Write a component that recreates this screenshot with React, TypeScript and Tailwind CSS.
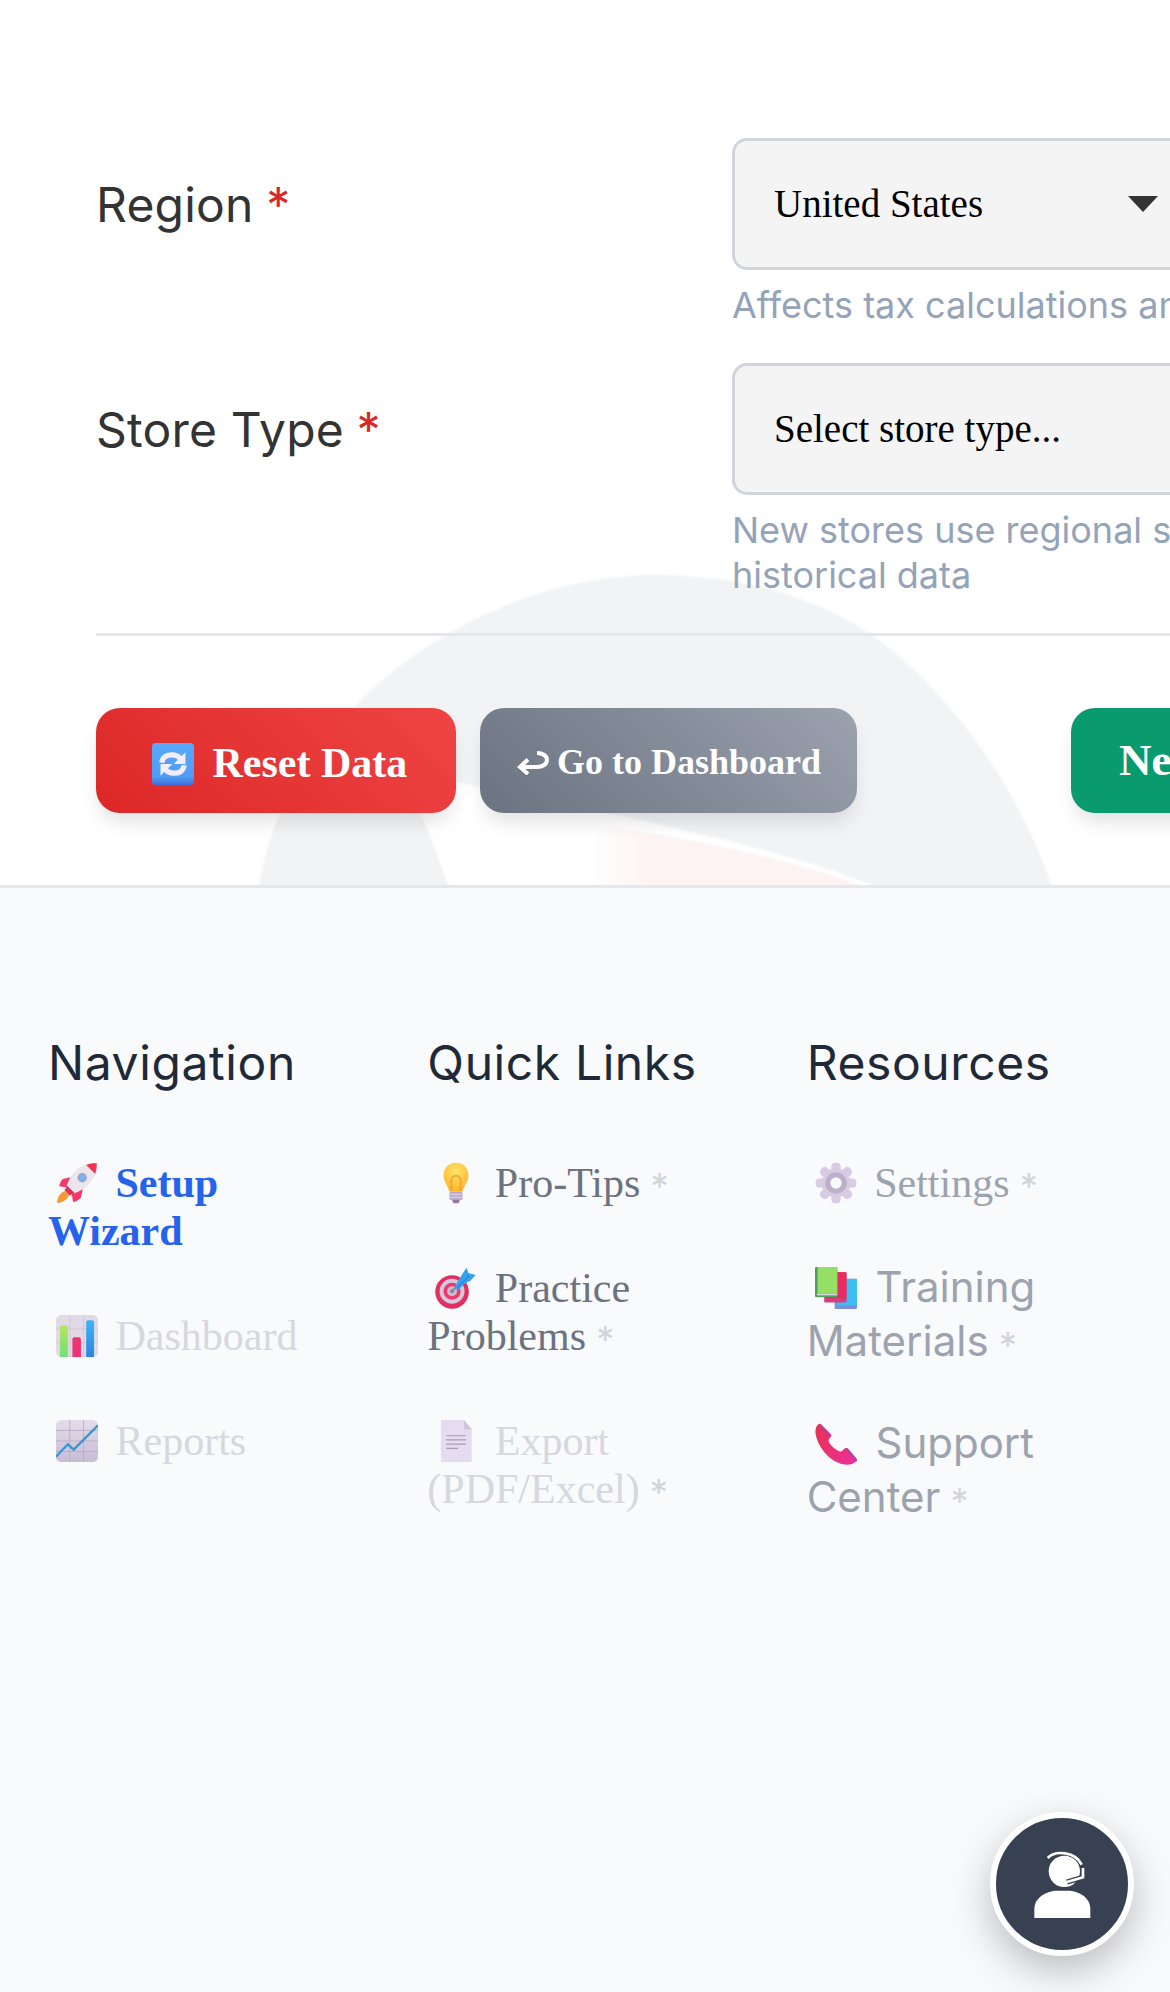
import type { ReactNode } from "react";

const emojiBox = "inline-block w-[42px] h-[42px] ml-[8px] mr-[7px] align-[-7px]";

function Rocket() {
  return (
    <svg viewBox="0 0 32 32" className={emojiBox}>
      <path d="M7 22C3 23 1 27 .8 31.2 5 31 9 28.5 10 25z" fill="#f59a32" />
      <path d="M12 11.5 5 13Q3 15 2.4 18.5L8.500 19.500z" fill="#f4386a" />
      <path d="M20.500 20 19 27Q16.500 30 13 30.500L12 24z" fill="#f4386a" />
      <path d="M31 1C24.500.5 18 3 13.500 8 11 11 9 15 8 18.500l5.500 5.500c3.500-1 7-3 10-5.500 5-4.500 8-11 7.500-17.500z" fill="#ebe5ee" />
      <path d="M31 1C28.500.8 25.500 1.100 23 2.200L29.800 9c1-2.500 1.400-5.500 1.200-8z" fill="#f0354d" />
      <path d="M8.500 18 6.500 21.500 10.500 25.500 14 23.500z" fill="#e0305f" />
      <circle cx="20" cy="12" r="3.600" fill="#a9a0b5" />
      <circle cx="20" cy="12" r="2.500" fill="#6db7f7" />
    </svg>
  );
}

function Bars() {
  return (
    <svg viewBox="0 0 32 32" className={emojiBox}>
      <defs>
        <linearGradient id="barGreen" x1="0" y1="0" x2="0" y2="1">
          <stop offset="0" stopColor="#b5e55a" />
          <stop offset="1" stopColor="#6fe07a" />
        </linearGradient>
        <linearGradient id="barBlue" x1="0" y1="0" x2="0" y2="1">
          <stop offset="0" stopColor="#3fb4f5" />
          <stop offset="1" stopColor="#2a86dc" />
        </linearGradient>
      </defs>
      <rect width="32" height="32" rx="4" fill="#e1dae6" />
      <path d="M0 10.500h32M0 21h32M10.500 0v32M21 0v32" stroke="#cdc4d4" strokeWidth=".6" />
      <path d="M3 9.500Q3 8 4.500 8h3Q9 8 9 9.500V32H3z" fill="url(#barGreen)" />
      <path d="M12.500 18.500q0-1.500 1.500-1.500h3.500q1.500 0 1.500 1.500V32h-6.500z" fill="#ee3474" />
      <path d="M23 5.500Q23 4 24.500 4h3Q29 4 29 5.500V32h-6z" fill="url(#barBlue)" />
    </svg>
  );
}

function LineChart() {
  return (
    <svg viewBox="0 0 32 32" className={emojiBox}>
      <defs>
        <linearGradient id="lineBg" x1="0" y1="0" x2="0" y2="1">
          <stop offset="0" stopColor="#e3dde8" />
          <stop offset="1" stopColor="#c9bcd6" />
        </linearGradient>
      </defs>
      <rect width="32" height="32" rx="4" fill="url(#lineBg)" />
      <path d="M0 8h32M0 16h32M0 24h32M10.500 0v32M21 0v32" stroke="#b9adc4" strokeWidth=".7" />
      <path d="M0 28 9 18.500 13.500 22.500 32 4" fill="none" stroke="#3a97d6" strokeWidth="1.800" />
    </svg>
  );
}

function Bulb() {
  return (
    <svg viewBox="0 0 32 32" className={emojiBox}>
      <defs>
        <radialGradient id="bulbFill" cx=".5" cy=".3" r=".7">
          <stop offset="0" stopColor="#ffe36a" />
          <stop offset="1" stopColor="#ffb52a" />
        </radialGradient>
      </defs>
      <path d="M16 .5C10 .5 6.500 5 6.500 10c0 5 3.500 8 4.500 12.500h10c1-4.500 4.500-7.500 4.500-12.500C25.500 5 22 .5 16 .5z" fill="url(#bulbFill)" />
      <path d="M12.500 22V14a3.500 3.500 0 1 1 7 0v8" fill="none" stroke="#f59f30" strokeWidth="1.200" />
      <rect x="11" y="22.500" width="10" height="6.500" rx="1.500" fill="#b7a7c4" />
      <path d="M11.500 24.500h9M11.500 26.800h9" stroke="#e6deec" strokeWidth=".8" />
      <path d="M13 29h6l-1 2.500h-4z" fill="#8f7ea0" />
    </svg>
  );
}

function Target() {
  return (
    <svg viewBox="0 0 32 32" className={emojiBox}>
      <circle cx="13" cy="19" r="12.800" fill="#e0305f" />
      <circle cx="13" cy="18.500" r="9.500" fill="#d3c8dc" />
      <circle cx="13" cy="18.500" r="6.500" fill="#f0386a" />
      <circle cx="13" cy="18.500" r="3.800" fill="#c9bdd2" />
      <circle cx="13" cy="18.500" r="1.500" fill="#8f8498" />
      <path d="M13 18.500 20 11.500" stroke="#8f8498" strokeWidth="1.500" />
      <path d="M15 15 19.500 7.500 24 .5 25.500 4.500 31 6 27 10.500 22 13 17.500 18z" fill="#35a4ec" />
      <path d="M17 16 26 6.500" stroke="#1f7fd0" strokeWidth=".8" />
    </svg>
  );
}

function Doc() {
  return (
    <svg viewBox="0 0 32 32" className={emojiBox}>
      <path d="M4.500 0H22l6 7v25H4.500z" fill="#e5dcf0" />
      <path d="M22 0l6 7h-6z" fill="#cfc4dc" />
      <path d="M8.500 12h15M8.500 15.200h15M8.500 18.400h15M8.500 21.600h9" stroke="#a79fb0" strokeWidth=".9" />
    </svg>
  );
}

function Gear() {
  return (
    <svg viewBox="0 0 32 32" className={emojiBox}>
      <g fill="#d8cce4">
        <rect x="12.500" y=".5" width="7" height="8" rx="3" />
        <rect x="12.500" y="23.500" width="7" height="8" rx="3" />
        <rect x="12.500" y=".5" width="7" height="8" rx="3" transform="rotate(45 16 16)" />
        <rect x="12.500" y="23.500" width="7" height="8" rx="3" transform="rotate(45 16 16)" />
        <rect x="12.500" y=".5" width="7" height="8" rx="3" transform="rotate(90 16 16)" />
        <rect x="12.500" y="23.500" width="7" height="8" rx="3" transform="rotate(90 16 16)" />
        <rect x="12.500" y=".5" width="7" height="8" rx="3" transform="rotate(135 16 16)" />
        <rect x="12.500" y="23.500" width="7" height="8" rx="3" transform="rotate(135 16 16)" />
        <circle cx="16" cy="16" r="11" />
      </g>
      <circle cx="16" cy="16" r="8.200" fill="#bdb0c9" />
      <circle cx="16" cy="16" r="4.300" fill="#f9fafb" />
    </svg>
  );
}

function Books() {
  return (
    <svg viewBox="0 0 32 32" className={emojiBox}>
      <rect x="15" y="9" width="17" height="23" rx="1" fill="#7d8fe0" />
      <rect x="16.500" y="9" width="15.500" height="20" fill="#3cc0f2" />
      <rect x="7" y="4" width="17" height="23" rx="1" fill="#d33f80" />
      <rect x="8.500" y="4" width="15.500" height="20" fill="#e62d62" />
      <rect x="0" y="0" width="17" height="23" rx="1" fill="#4fa05a" />
      <rect x="2" y="0" width="15" height="20" fill="#96df66" />
      <rect x="1.500" y="20.200" width="15.500" height="1.400" fill="#dcd6e6" />
    </svg>
  );
}

function Phone() {
  return (
    <svg viewBox="0 0 32 32" className={emojiBox}>
      <defs>
        <linearGradient id="phoneFill" x1="0" y1="0" x2="1" y2="1">
          <stop offset="0" stopColor="#e8304f" />
          <stop offset="1" stopColor="#ee2f9c" />
        </linearGradient>
      </defs>
      <path d="M4.500 1 12 8.500Q13 9.800 11.500 11L10.500 12.500Q10 14 11.500 16 14.500 20 18.500 21.500 20 22 21 21L22.500 19.500Q24 18.500 25 19.500L31.500 27Q32.500 28.500 31 29.500 28 32 24.500 31.800 14 31 7 22 1 14.500.3 7 .3 3 2.500 1 3.500.3 4.500 1z" fill="url(#phoneFill)" />
      <path d="M4.500 1 12 8.500Q13 9.800 11.800 10.800L3 2Q3.800.6 4.500 1zM25 19.500 31.500 27Q32.500 28.500 31 29.500L23 19.700Q24 18.700 25 19.500z" fill="#b0459e" />
    </svg>
  );
}

function Refresh() {
  return (
    <svg viewBox="0 0 32 32" className="inline-block w-[42px] h-[42px] ml-[8px] mr-[8px] align-[-8px]">
      <defs>
        <linearGradient id="refreshFill" x1="0" y1="0" x2="0" y2="1">
          <stop offset="0" stopColor="#5aa9fb" />
          <stop offset=".8" stopColor="#4f9cf5" />
          <stop offset="1" stopColor="#3f6fdc" />
        </linearGradient>
      </defs>
      <rect width="32" height="32" rx="3" fill="url(#refreshFill)" />
      <path d="M7.500 15C8 10.500 11.500 9 15 9c3 0 5.500 1 7 3.500M24.500 17C24 21.500 20.500 23 17 23c-3 0-5.500-1-7-3.500" fill="none" stroke="#f3ecfa" strokeWidth="4" />
      <path d="M25.500 7v9H16.500zM6.500 25v-9H15.500z" fill="#f3ecfa" />
    </svg>
  );
}

type LinkItem = {
  icon: ReactNode;
  label: string;
  color: string;
  gap: string;
  sans?: boolean;
  active?: boolean;
  required?: boolean;
};

const columns: { title: string; items: LinkItem[] }[] = [
  {
    title: "Navigation",
    items: [
      { icon: <Rocket />, label: "Setup Wizard", color: "text-[#2563eb]", gap: "", active: true },
      { icon: <Bars />, label: "Dashboard", color: "text-[#d6d8de]", gap: "mt-[57px]" },
      { icon: <LineChart />, label: "Reports", color: "text-[#d6d8de]", gap: "mt-[57px]" },
    ],
  },
  {
    title: "Quick Links",
    items: [
      { icon: <Bulb />, label: "Pro-Tips", color: "text-[#6b7280]", gap: "", required: true },
      { icon: <Target />, label: "Practice Problems", color: "text-[#6b7280]", gap: "mt-[57px]", required: true },
      { icon: <Doc />, label: "Export (PDF/Excel)", color: "text-[#d6d8de]", gap: "mt-[57px]", required: true },
    ],
  },
  {
    title: "Resources",
    items: [
      { icon: <Gear />, label: "Settings", color: "text-[#9ca3af]", gap: "", required: true },
      { icon: <Books />, label: "Training Materials", color: "text-[#9ca3af]", gap: "mt-[53px]", sans: true, required: true },
      { icon: <Phone />, label: "Support Center", color: "text-[#9ca3af]", gap: "mt-[48px]", sans: true, required: true },
    ],
  },
];

function FormRow({ label, value, hint, arrow }: { label: string; value: string; hint: ReactNode; arrow?: boolean }) {
  return (
    <div className="flex mb-[35px]">
      <div className="w-[636px] shrink-0 pt-[31px] text-[48px] leading-[72px] tracking-[0.2px] text-[#333333]">
        {label} <span className="-ml-[1px] text-[#dc2626]">*</span>
      </div>
      <div className="w-[700px] shrink-0">
        <div className="h-[132px] flex items-center justify-between rounded-[15px] border-[3px] border-[#d1d5db] bg-[#f4f4f4] pl-[39px] pr-[271px] font-['Liberation_Serif',serif] text-[39px] text-black">
          <span>{value}</span>
          {arrow && (
            <svg viewBox="0 0 30 16" className="w-[30px] h-[16px]">
              <path d="M0 0h30L15 16z" fill="#333333" />
            </svg>
          )}
        </div>
        <p className="mt-[13px] text-[36px] leading-[45px] text-[#94a3b8] whitespace-nowrap">{hint}</p>
      </div>
    </div>
  );
}

function App() {
  return (
    <div className="relative w-[1170px] h-[1992px] overflow-hidden bg-[#f9fafc] font-['Inter',sans-serif]">
      <section className="relative h-[888px] overflow-hidden bg-white border-b-[3px] border-[#e5e7eb] pt-[138px] pl-[96px]">
        <svg viewBox="0 0 1170 888" className="absolute left-0 top-0 w-[1170px] h-[888px] blur-[1px]">
          <defs>
            <linearGradient id="swoosh" gradientUnits="userSpaceOnUse" x1="590" y1="0" x2="650" y2="0">
              <stop offset="0" stopColor="#ffffff" />
              <stop offset="1" stopColor="#fdf3f3" />
            </linearGradient>
          </defs>
          <path d="M258 895C268 820 300 760 357 703 410 650 520 576 653 575 760 575 840 605 900 657 960 710 1020 790 1055 895z" fill="#f2f3f5" />
          <path d="M395 770C420 800 435 850 452 895H895C800 850 600 810 395 770z" fill="#ffffff" />
          <path d="M590 824C700 840 800 860 885 895H590z" fill="url(#swoosh)" />
        </svg>
        <div className="relative w-[1400px]">
          <FormRow label="Region" value="United States" hint="Affects tax calculations and reports" arrow />
          <FormRow
            label="Store Type"
            value="Select store type..."
            hint={
              <>
                New stores use regional sales averages instead of
                <br />
                historical data
              </>
            }
          />
          <div className="h-[3px] bg-[#e5e7eb]" />
          <div className="mt-[72px] flex items-stretch font-['Liberation_Serif',serif] font-bold text-white whitespace-nowrap">
            <button className="h-[105px] w-[360px] shrink-0 rounded-[24px] bg-linear-45 from-[#dc2626] to-[#ef4444] pl-[48px] pt-[5px] text-left text-[42px] shadow-[0_12px_20px_-4px_rgba(0,0,0,0.12)]">
              <Refresh /> Reset Data
            </button>
            <button className="ml-[24px] h-[105px] w-[377px] shrink-0 rounded-[24px] bg-linear-45 from-[#6b7280] to-[#9ca3af] pl-[37px] pt-[2px] text-left text-[36px] shadow-[0_12px_20px_-4px_rgba(0,0,0,0.12)]">
              <svg viewBox="0 0 32 24" className="inline-block w-[32px] h-[24px] mr-[8px] align-[-1px]">
                <path d="M3 16H20C26 16 30 13 30 9 30 5 26 2 20 2M11 8.500 3 16 11 23" fill="none" stroke="#ffffff" strokeWidth="4" />
              </svg>
              Go to Dashboard
            </button>
            <button className="ml-[214px] h-[105px] w-[300px] shrink-0 rounded-[24px] bg-[#099b6d] pl-[48px] text-left text-[45px] shadow-[0_12px_20px_-4px_rgba(0,0,0,0.12)]">
              Next Step
            </button>
          </div>
        </div>
      </section>

      <footer className="grid w-[1072px] ml-[48px] grid-cols-3 gap-x-[66px] pt-[139px]">
        {columns.map((col) => (
          <div key={col.title}>
            <h3 className="mb-[60px] text-[48px] leading-[72px] tracking-[0.6px] text-[#1f2937]">{col.title}</h3>
            <ul>
              {col.items.map((item) => (
                <li
                  key={item.label}
                  className={`${item.gap} ${item.color} ${item.active ? "font-bold" : ""} ${
                    item.sans ? "text-[42px] leading-[54px]" : "font-['Liberation_Serif',serif] text-[42px] leading-[48px]"
                  }`}
                >
                  {item.icon} {item.label}
                  {item.required && <span className="font-['Inter',sans-serif] text-[36px] leading-none font-normal text-[#d1d5db] align-[-2px]"> *</span>}
                </li>
              ))}
            </ul>
          </div>
        ))}
      </footer>

      <button className="absolute left-[990px] top-[1812px] flex h-[144px] w-[144px] items-center justify-center rounded-full border-[6px] border-white bg-[#374151] shadow-[0_15px_40px_rgba(0,0,0,0.25)]">
        <svg viewBox="215 205 180 210" className="w-[60px] h-[70px]">
          <circle cx="312" cy="272" r="47" fill="#ffffff" />
          <path d="M262 232C285 208 345 212 364 252" fill="none" stroke="#ffffff" strokeWidth="8" />
          <path d="M320 304 368 290" fill="none" stroke="#374151" strokeWidth="16" />
          <path d="M320 304 368 290V262" fill="none" stroke="#ffffff" strokeWidth="8" />
          <path d="M222 412V385C222 350 260 330 290 330H322C355 330 390 350 390 385V412z" fill="#ffffff" />
        </svg>
      </button>
    </div>
  );
}

export default App;
